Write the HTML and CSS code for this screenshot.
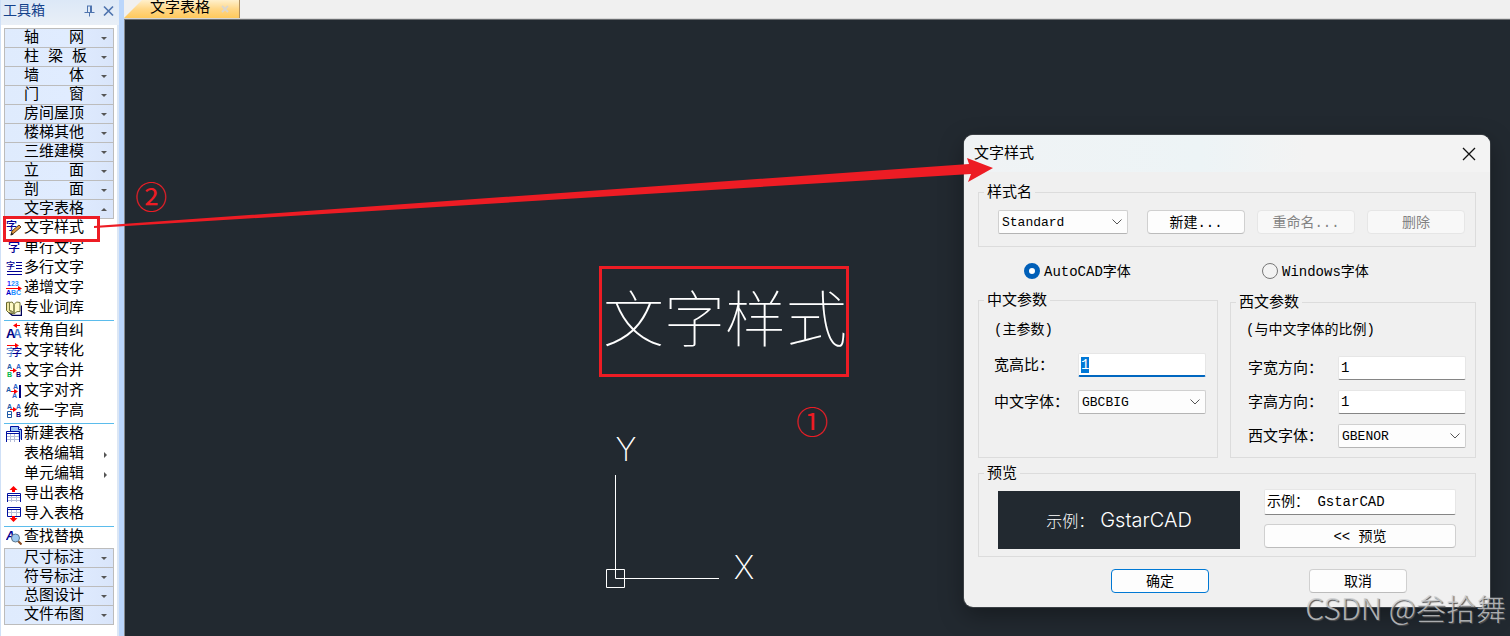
FILE: index.html
```html
<!DOCTYPE html>
<html lang="zh-CN">
<head>
<meta charset="utf-8">
<title>文字样式</title>
<link rel="stylesheet" href="styles.css">
</head>
<body>
<div class="app">
  <aside class="toolbox">
    <header class="toolbox-head">
      <h2 class="toolbox-title">工具箱</h2>
      <button class="head-btn" aria-label="固定"><svg width="11" height="12" viewBox="0 0 11 12"><path d="M3 1h5M3.500 1v6M0.500 7.500h10M5.500 8v3.500" fill="none" stroke="#4f74ae"/><path d="M7 1v6" stroke="#4f74ae" stroke-width="2"/></svg></button>
      <button class="head-btn" aria-label="关闭"><svg width="11" height="12" viewBox="0 0 11 12"><path d="M1 1.500l9 9M10 1.500l-9 9" stroke="#4f74ae" stroke-width="1.700"/></svg></button>
    </header>
    <nav class="menu">
      <div class="groups">
        <button class="group"><span class="group-name">轴 网</span><i class="down"></i></button>
        <button class="group"><span class="group-name">柱 梁 板</span><i class="down"></i></button>
        <button class="group"><span class="group-name">墙 体</span><i class="down"></i></button>
        <button class="group"><span class="group-name">门 窗</span><i class="down"></i></button>
        <button class="group"><span class="group-name">房间屋顶</span><i class="down"></i></button>
        <button class="group"><span class="group-name">楼梯其他</span><i class="down"></i></button>
        <button class="group"><span class="group-name">三维建模</span><i class="down"></i></button>
        <button class="group"><span class="group-name">立 面</span><i class="down"></i></button>
        <button class="group"><span class="group-name">剖 面</span><i class="down"></i></button>
        <button class="group"><span class="group-name">文字表格</span><i class="up"></i></button>
      </div>
      <div class="items">
        <button class="item"><svg class="icon" viewBox="0 0 16 16"><text class="zi" x="0" y="10" font-size="11">字</text><path d="M5 15l1-4 7-6 2 2-7 6z" fill="#e09a45" stroke="#5c3a14"/><path d="M4.500 15.500l1-3 2 2z" fill="#222"/></svg>文字样式</button>
        <button class="item"><svg class="icon" viewBox="0 0 16 16"><text class="zi" x="2" y="12" font-size="12">字</text></svg>单行文字</button>
        <button class="item"><svg class="icon" viewBox="0 0 16 16"><text class="zi" x="0" y="9" font-size="9">字</text><path d="M10 2.500h6M10 5.500h6M10 8.500h6M1 11.500h15M1 14.500h15" stroke="#000094"/></svg>多行文字</button>
        <button class="item"><svg class="icon" viewBox="0 0 16 16"><text class="tiny" x="1" y="6" fill="#1a1aff">1<tspan fill="#1e90ff">23</tspan></text><path d="M0 8.500h13" stroke="#f00"/><path d="M12 6l4 2.500-4 2.500z" fill="#f00"/><text class="tiny" x="0" y="15" fill="#0000c8">A<tspan fill="#1e90ff">BC</tspan></text></svg>递增文字</button>
        <button class="item"><svg class="icon" viewBox="0 0 16 16"><path d="M2.500 12l4 3.500h9v-10" fill="none" stroke="#00005a" stroke-width="1.500"/><path d="M.500 2.500l3-.500v8l4 4-5-1.500-2-2z" fill="#efe6a0" stroke="#66662a"/><path d="M3.500 2.500q3-2 4.500 2v9q-2-3.500-4.500-3zM8 4.500q2-4 6-2v9q-3-1-6 2.500z" fill="#fffbc8" stroke="#77773c"/></svg>专业词库</button>
      </div>
      <div class="items">
        <button class="item"><svg class="icon" viewBox="0 0 16 16"><text x="7" y="15" font-size="12" font-weight="700" fill="#4a7fd0">A</text><text x="0" y="15" font-size="13" font-weight="700" fill="#000080">A</text><path d="M8 2.500h6" stroke="#f00"/><path d="M7 2.500l4-2.500v5z" fill="#f00"/></svg>转角自纠</button>
        <button class="item"><svg class="icon" viewBox="0 0 16 16"><text x="0" y="13" font-size="10" fill="#3a70c8">字</text><text class="zi" x="6" y="13" font-size="10">字</text><path d="M1 2.500h9" stroke="#f00"/><path d="M9 0l4 2.500-4 2.500z" fill="#f00"/></svg>文字转化</button>
        <button class="item"><svg class="icon" viewBox="0 0 16 16"><text class="tiny" x="1" y="6" fill="#1e5aa8">A</text><text class="tiny" x="1" y="14" fill="#00b84a">B</text><text class="tiny" x="10" y="6" fill="#2a60c8">A</text><text class="tiny" x="10" y="14" fill="#000080">B</text><path d="M4 7.500h4" stroke="#f00"/><path d="M7 5l4 2.500-4 2.500z" fill="#f00"/></svg>文字合并</button>
        <button class="item"><svg class="icon" viewBox="0 0 16 16"><text class="tiny" x="0" y="9" fill="#1e5aa8">A</text><text class="tiny" x="7" y="6" fill="#2a60c8">A</text><text class="tiny" x="6" y="15" fill="#2a60c8">A</text><path d="M14 2v13" stroke="#000080" stroke-width="2"/><path d="M5 8.500h4" stroke="#f00"/><path d="M8 6l4 2.500-4 2.500z" fill="#f00"/></svg>文字对齐</button>
        <button class="item"><svg class="icon" viewBox="0 0 16 16"><text class="tiny" x="1" y="6" fill="#1e5aa8">A</text><path d="M1.500 8.500h4v6h-4zM1.500 11.500h4" fill="none" stroke="#1e5aa8"/><text class="tiny" x="10" y="6" fill="#2a60c8">A</text><text class="tiny" x="10" y="14" fill="#000080">B</text><path d="M4 6.500h4" stroke="#f00"/><path d="M7 4l4 2.500-4 2.500z" fill="#f00"/></svg>统一字高</button>
      </div>
      <div class="items">
        <button class="item"><svg class="icon" viewBox="0 0 16 16"><path d="M4.500 5V.500h8l3 3V14" fill="#9cc4f5" stroke="#0010a0"/><path d="M12.500.500v3h3" fill="#fff" stroke="#0010a0"/><path d="M.500 5.500h12v10h-12z" fill="#fff"/><path d="M1 10.500h12M1 13.500h12M4.500 8v8M8.500 8v8" stroke="#b4bdd8"/><path d="M.500 16V5.500h13V16M1 7.500h12" fill="none" stroke="#0010a0"/></svg>新建表格</button>
        <button class="item"><span class="icon"></span>表格编辑<i class="right"></i></button>
        <button class="item"><span class="icon"></span>单元编辑<i class="right"></i></button>
        <button class="item"><svg class="icon" viewBox="0 0 16 16"><path d="M7.500 0l4 4H9v2H6V4H3.500z" fill="#f00"/><path d="M1 11.500h14M1 14.500h14M5.500 9v7M10.500 9v7" stroke="#b4bdd8"/><path d="M1.500 16V7.500h13V16M1 9.500h14" fill="none" stroke="#0010a0"/></svg>导出表格</button>
        <button class="item"><svg class="icon" viewBox="0 0 16 16"><path d="M1 6.500h14M5.500 4v6M10.500 4v6" stroke="#b4bdd8"/><path d="M1.500 1.500h13v9h-13zM1 3.500h14" fill="none" stroke="#0010a0"/><path d="M7.500 16l4-4H9v-2H6v2H3.500z" fill="#f00"/></svg>导入表格</button>
      </div>
      <div class="items">
        <button class="item"><svg class="icon" viewBox="0 0 16 16"><text x="0" y="11" font-size="12" font-style="italic" font-weight="700" fill="#000094">A</text><path d="M12 12l3.500 3.500" stroke="#8a4a20" stroke-width="2"/><circle cx="9.500" cy="9" r="4" fill="#9cc8ee" stroke="#5a7890"/></svg>查找替换</button>
      </div>
      <div class="groups last">
        <button class="group"><span class="group-name">尺寸标注</span><i class="down"></i></button>
        <button class="group"><span class="group-name">符号标注</span><i class="down"></i></button>
        <button class="group"><span class="group-name">总图设计</span><i class="down"></i></button>
        <button class="group"><span class="group-name">文件布图</span><i class="down"></i></button>
      </div>
    </nav>
  </aside>

  <main class="workspace">
    <div class="tabs">
      <button class="tab">文字表格<svg width="8" height="8" viewBox="0 0 8 8"><path d="M1 1l6 6M7 1L1 7" stroke="#dcd6cc" stroke-width="2"/></svg></button>
    </div>
    <div class="canvas"></div>
  </main>

  <div class="drawing-text">文字样式</div>
  <svg class="ucs" width="160" height="160" viewBox="0 0 160 160">
    <path d="M15.500 45v103.500H119M6.500 139.500h18v18h-18z" fill="none" stroke="#fff"/>
    <text x="26" y="31" text-anchor="middle">Y</text>
    <text x="144" y="149" text-anchor="middle">X</text>
  </svg>
  <span class="step step-one">①</span>
  <span class="step step-two">②</span>

  <form class="dialog">
    <header class="dialog-head">
      <h1 class="dialog-title">文字样式</h1>
      <button type="button" class="close" aria-label="关闭"><svg width="14" height="14" viewBox="0 0 14 14"><path d="M1 1l12 12M13 1L1 13" stroke="#111" stroke-width="1.300"/></svg></button>
    </header>
    <div class="dialog-body">
      <fieldset class="box names">
        <legend>样式名</legend>
        <span class="pick"><select aria-label="样式名"><option>Standard</option></select><svg viewBox="0 0 10 6"><path d="M.500.500L5 5 9.500.500"/></svg></span>
        <button type="button" class="btn">新建...</button>
        <button type="button" class="btn" disabled>重命名...</button>
        <button type="button" class="btn" disabled>删除</button>
      </fieldset>
      <div class="kinds">
        <label class="kind"><input type="radio" name="kind" checked><span>AutoCAD字体</span></label>
        <label class="kind"><input type="radio" name="kind"><span>Windows字体</span></label>
      </div>
      <div class="columns">
        <fieldset class="box params chinese">
          <legend>中文参数</legend>
          <p class="note">(主参数)</p>
          <div class="fields">
            <label for="ratio">宽高比：</label><input id="ratio" class="line" value="1">
            <label for="cn">中文字体：</label><span class="pick"><select id="cn"><option>GBCBIG</option></select><svg viewBox="0 0 10 6"><path d="M.500.500L5 5 9.500.500"/></svg></span>
          </div>
        </fieldset>
        <fieldset class="box params western">
          <legend>西文参数</legend>
          <p class="note">(与中文字体的比例)</p>
          <div class="fields">
            <label for="w">字宽方向：</label><input id="w" class="line" value="1">
            <label for="h">字高方向：</label><input id="h" class="line" value="1">
            <label for="en">西文字体：</label><span class="pick"><select id="en"><option>GBENOR</option></select><svg viewBox="0 0 10 6"><path d="M.500.500L5 5 9.500.500"/></svg></span>
          </div>
        </fieldset>
      </div>
      <fieldset class="box preview">
        <legend>预览</legend>
        <div class="screen"><span class="screen-cn">示例：</span><span class="screen-en">GstarCAD</span></div>
        <div class="sample">
          <input class="line" aria-label="示例" value="示例： GstarCAD">
          <button type="button" class="btn">&lt;&lt; 预览</button>
        </div>
      </fieldset>
      <footer class="actions">
        <button type="button" class="btn primary">确定</button>
        <button type="button" class="btn">取消</button>
      </footer>
    </div>
  </form>

  <div class="mark mark-menu"></div>
  <div class="mark mark-text"></div>
  <svg class="arrow" width="1000" height="240" viewBox="0 0 1000 240"><path d="M94 226L969 164 967 158 993 168 968 182 971 174 94 228z" fill="#ed1c24"/></svg>
  <div class="watermark">CSDN @叁拾舞</div>
</div>
<script src="main.js"></script>
</body>
</html>
```

FILE: main.js
```js
const ratio = document.getElementById('ratio');
ratio.focus();
ratio.select();
```

FILE: styles.css
```css
* { box-sizing: border-box; }
body {
  margin: 0;
  font: 15px/20px "Liberation Mono", "Noto Sans CJK SC", monospace;
  font-weight: 400;
  color: #000;
}
button, input, select { font: inherit; color: inherit; }
button { padding: 0; border: 0; background: none; }
h1, h2, p { margin: 0; font: inherit; }
svg { display: block; }

.app { position: relative; display: flex; min-height: 100vh; overflow: hidden; }

/* toolbox */
.toolbox {
  flex: none;
  width: 124px;
  border-left: 1px solid #cfe0f7;
  border-right: 5px solid #bbd6fb;
  background: #fff;
  box-shadow: inset -2px 0 #dce7f5;
}
.toolbox-head {
  display: flex;
  align-items: center;
  gap: 8px;
  height: 25px;
  margin-bottom: 3px;
  padding: 0 5px 4px 2px;
  background: linear-gradient(#dce8f7, #e9eff7);
}
.toolbox-title { flex: 1; font-size: 14px; color: #15428b; }
.menu { padding: 0 5px 0 3px; }
.groups { margin-bottom: -1px; border: 1px solid #bcbcbc; border-bottom: 0; }
.groups.last { margin-top: 1px; }
.group {
  display: flex;
  align-items: center;
  justify-content: space-between;
  width: 100%;
  height: 19px;
  padding: 0 6px 0 19px;
  border-bottom: 1px solid #bcbcbc;
  background: linear-gradient(90deg, #dfebfd, #e0ecff 60%, #d9e5fa);
}
.group-name { width: 60px; padding-top: 2px; line-height: 18px; white-space: nowrap; text-align: left; text-align-last: justify; }
.down, .up, .right { border: 3px solid transparent; }
.down { border-top-color: #555; border-bottom: 0; }
.up { border-bottom-color: #555; border-top: 0; }
.right { margin: 0 7px 0 auto; border-left-color: #555; border-right: 0; }
.items + .items { margin-top: 2px; border-top: 1px solid #5bbcec; }
.item { display: flex; align-items: center; width: 100%; height: 20px; padding: 2px 0 0 2px; text-align: left; }
.icon { flex: none; width: 16px; height: 16px; margin: 0 2px 2px 0; font-family: "Liberation Sans", "Noto Sans CJK SC", sans-serif; }
.zi { fill: #000094; font-weight: 500; }
.tiny { font-size: 7px; font-weight: 700; }

/* workspace */
.workspace { flex: 1; display: flex; flex-direction: column; min-width: 0; }
.tabs { height: 19px; background: #f0f0f0; border-bottom: 1px solid #d6d6d6; }
.tab {
  display: flex;
  align-items: center;
  gap: 11px;
  height: 18px;
  padding: 0 10px 1px 26px;
  border-right: 1px solid #b09060;
  background: linear-gradient(#fff0cc, #ffd787 50%, #ffc95c);
  clip-path: polygon(18px 0, 100% 0, 100% 100%, 0 100%);
}
.canvas { flex: 1; background: #222930; border-left: 1px solid #85888b; border-top: 1px solid #6a6d70; }

.drawing-text {
  position: absolute;
  left: 603px;
  top: 271px;
  font: 100 61px/90px "Noto Sans CJK SC", sans-serif;
  color: #fff;
}
.ucs { position: absolute; left: 600px; top: 430px; font: 200 32px Inter, sans-serif; fill: #fff; }
.step { position: absolute; font: 400 32px/36px "Noto Sans CJK SC", sans-serif; color: #ed1c24; }
.step-one { left: 796px; top: 402px; }
.step-two { left: 135px; top: 177px; }
.mark { position: absolute; border: 3px solid #ed1c24; pointer-events: none; }
.mark-menu { left: 3px; top: 216px; width: 97px; height: 26px; }
.mark-text { left: 599px; top: 266px; width: 250px; height: 111px; }
.arrow { position: absolute; left: 0; top: 0; pointer-events: none; }

/* dialog */
.dialog {
  position: absolute;
  right: 20px;
  top: 135px;
  width: 526px;
  border-radius: 9px;
  background: #f0f0f0;
  box-shadow: 0 0 0 1px #3b4045, 0 8px 24px rgba(0, 0, 0, .35);
}
.dialog-head {
  display: flex;
  align-items: center;
  justify-content: space-between;
  height: 37px;
  padding: 0 14px 0 10px;
  border-radius: 9px 9px 0 0;
  background: linear-gradient(90deg, #f0f3f5, #edf4f6 45%, #f3f3f3 65%);
}
.dialog-title { padding-top: 2px; }
.dialog-body { padding: 10px 14px 14px; }
.box { min-width: 0; margin: 0; padding: 0; border: 1px solid #dcdcdc; }
.box legend { margin-left: 5px; padding: 4px 3px 0; line-height: 16px; }
.btn {
  height: 24px;
  width: 98px;
  padding-top: 1px;
  border: 1px solid #d0d0d0;
  border-bottom-color: #bcbcbc;
  border-radius: 4px;
  background: #fdfdfd;
  font-size: 14px;
}
.btn:disabled { color: #838383; background: #f8f8f8; border-color: #e6e6e6; }
.btn.primary { border-color: #0078d4; }
.pick { display: grid; align-items: center; }
.pick > * { grid-area: 1 / 1; }
.pick select {
  appearance: none;
  width: 100%;
  height: 24px;
  padding: 2px 3px 0;
  border: 1px solid #d0d0d0;
  border-bottom-color: #b4b4b4;
  border-radius: 2px;
  background: #fdfdfd;
  font-size: 13px;
}
.pick svg { width: 10px; height: 6px; justify-self: end; margin-right: 6px; fill: none; stroke: #555; pointer-events: none; }
.line {
  width: 100%;
  height: 24px;
  padding: 0 2px;
  border: 1px solid #e6e6e6;
  border-bottom-color: #858585;
  border-radius: 2px;
  background: #fff;
  font-size: 14px;
}
.line:focus { outline: 0; border-bottom: 2px solid #0067c0; }
.line::selection { color: #fff; background: #0078d7; }

.names { display: flex; align-items: center; gap: 12px; padding: 8px 10px 12px 19px; }
.names .pick { width: 130px; margin-right: 7px; }
.names legend, .preview legend { margin-left: -14px; }
.kinds { display: grid; grid-template-columns: 238px 1fr; align-items: center; height: 43px; padding: 4px 0 0 46px; }
.kind { display: flex; align-items: center; gap: 4px; font-size: 14px; }
.kind span { padding-top: 2px; }
.kind input {
  appearance: none;
  width: 16px;
  height: 16px;
  margin: 0;
  border: 1px solid #777;
  border-radius: 50%;
  background: #f3f3f3;
}
.kind input:checked { border: 5px solid #005fb8; background: #fff; }
.columns { display: grid; grid-template-columns: 240px 1fr; gap: 12px; }
.params { padding-top: 10px; }
.western { margin-top: 2px; padding-top: 8px; }
.note { margin: 0 15px; font-size: 14px; }
.fields { display: grid; align-items: center; }
.fields label { padding-top: 4px; }
.chinese .fields { grid-template-columns: 84px 1fr; gap: 13px 0; padding: 13px 11px 43px 15px; }
.western .fields { grid-template-columns: 90px 1fr; gap: 10px 0; padding: 16px 9px 8px 17px; }
.preview { display: grid; grid-template-columns: 242px 1fr; gap: 24px; margin-top: 5px; padding: 6px 19px 7px; }
.screen {
  display: flex;
  align-items: center;
  justify-content: center;
  gap: 6px;
  margin-top: 2px;
  height: 58px;
  background: #222930;
  color: #fff;
}
.screen-cn { font: 300 16px/20px "Noto Sans CJK SC", sans-serif; }
.screen-en { font: 300 20px/24px Inter, sans-serif; }
.sample { display: grid; gap: 9px; align-content: start; }
.sample .line { height: 26px; padding-bottom: 4px; }
.sample .btn { width: 100%; }
.actions { display: flex; gap: 100px; padding: 12px 0 0 133px; }

.watermark {
  position: absolute;
  right: 4px;
  bottom: 8px;
  font: 300 30px/42px "Noto Sans CJK SC", sans-serif;
  color: rgba(205, 207, 209, .8);
  text-shadow: 1px 1px 1px #555;
}
```
